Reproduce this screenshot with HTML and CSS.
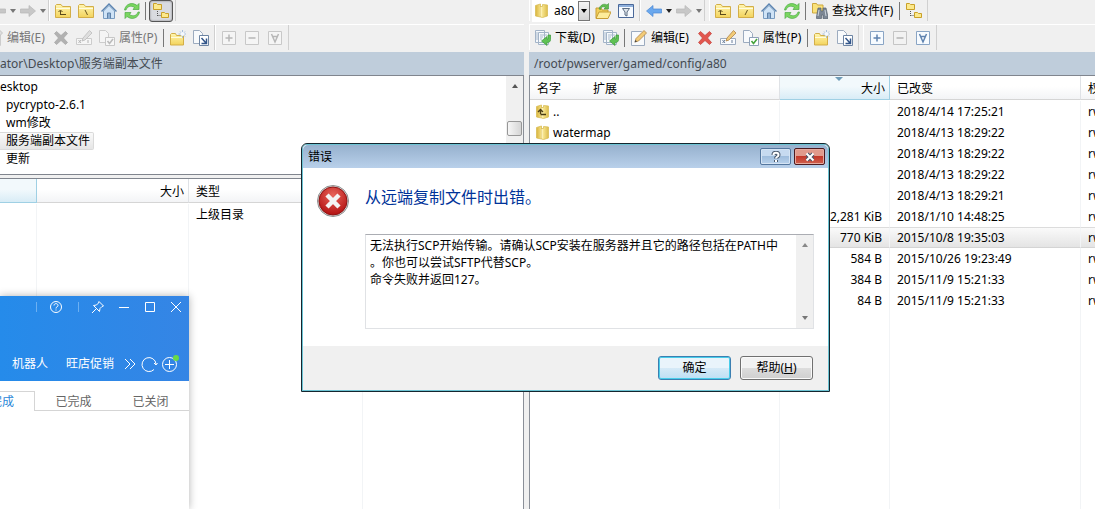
FILE: index.html
```html
<!DOCTYPE html>
<html lang="zh-CN">
<head>
  <meta charset="UTF-8">
  <title>a80 - WinSCP</title>
  <link rel="stylesheet" href="styles.css">
</head>
<body>
  <svg class="sprite" aria-hidden="true">
    <linearGradient id="gold" x1="0" y1="0" x2="0" y2="1"><stop offset="0" stop-color="#fff6b0"/><stop offset="1" stop-color="#f3d35c"/></linearGradient>
    <linearGradient id="goldDark" x1="0" y1="0" x2="1" y2="0"><stop offset="0" stop-color="#d9b43c"/><stop offset=".5" stop-color="#fbeb9a"/><stop offset="1" stop-color="#dcbc4a"/></linearGradient>
    <radialGradient id="red" cx=".5" cy=".3" r=".7"><stop offset="0" stop-color="#e8645a"/><stop offset="1" stop-color="#b31212"/></radialGradient>
    <symbol id="folder" viewBox="0 0 16 16">
      <path d="M.5 14.500V2.500l1-1h4.500l1.500 2h8v11z" fill="url(#gold)" stroke="#d3ae48"/>
      <path d="M1 5.500h14" stroke="#fffbe0"/>
    </symbol>
    <symbol id="folder-up" viewBox="0 0 16 16">
      <use href="#folder"/>
      <path d="M5.500 11.500V7.500M3.500 9l2-2 2 2M5 11.500h6" fill="none" stroke="#5b4a1c"/>
    </symbol>
    <symbol id="folder-root" viewBox="0 0 16 16">
      <use href="#folder"/><path d="M7 7l2.500 5" stroke="#6b571f"/>
    </symbol>
    <symbol id="folder-slash" viewBox="0 0 16 16">
      <use href="#folder"/><path d="M9.500 7L7 12" stroke="#6b571f"/>
    </symbol>
    <symbol id="home" viewBox="0 0 16 16">
      <path d="M2.500 8v7.500h11V8L8 2.500z" fill="#cfe3f6" stroke="#7a9cc0"/>
      <path d="M.5 8.500L8 1l7.500 7.500" fill="none" stroke="#5a83b0" stroke-width="1.300"/>
      <path d="M6.500 15.500V10h3v5.500" fill="#8fb0d2" stroke="#5f82aa"/>
    </symbol>
    <symbol id="refresh" viewBox="0 0 16 16">
      <path d="M2 7C3 3.500 7 2 10.500 4.500L9 6.500h6V.5l-2 2C8-1.500 1.500 1 .5 7zM14 9c-1 3.500-5 5-8.500 2.500L7 9.500H1v6l2-2c5 4 11.500 1.500 12.500-4.500z" fill="#7ad65f" stroke="#4dab47" stroke-width=".7"/>
    </symbol>
    <symbol id="tree" viewBox="0 0 16 16">
      <path d="M.5 6.500v-6h3l1 1h4v5zM8.500 14.500v-5h3l1 1h3v4z" fill="#fce98c" stroke="#c9a029"/>
      <path d="M4.500 8v5M4.500 12.500H8" stroke="#555" stroke-dasharray="1 1"/>
    </symbol>
    <symbol id="book" viewBox="0 0 16 16">
      <path d="M1.500 2.500l5-1.500v13l-5-1zM6.500 3.500h2v-2l5 .5v11l-5 1.500-2-.5z" fill="url(#goldDark)" stroke="#d8bd55" stroke-width=".8"/>
      <path d="M7 4v9.500" stroke="#fff6c8"/>
    </symbol>
    <symbol id="book-up" viewBox="0 0 16 16">
      <use href="#book"/><path d="M5.500 10V6M3 8l2.500-2.500L8 8M5.500 10.500H11" fill="none" stroke="#4a3c13" stroke-width="1.300"/>
    </symbol>
    <symbol id="open" viewBox="0 0 16 16">
      <path d="M1 15V5h5l1 2h6v8z" fill="#f2cf5a" stroke="#c79d35"/>
      <path d="M1 15.500L4 9h12l-3 6.500z" fill="#fdec9a" stroke="#c79d35"/>
      <path d="M4 6C5 2 9 0 12 2l1.500-1.500V6H9l1.500-1.500C8 3 6 4 5.500 6.500z" fill="#63bd50" stroke="#3f9338" stroke-width=".6"/>
    </symbol>
    <symbol id="filter" viewBox="0 0 16 16">
      <path d="M.5 1.500h15v13H.5z" fill="#f6faff" stroke="#4a6899"/><path d="M1 3h14" stroke="#8fb0dc" stroke-width="2"/>
      <path d="M4.500 5.500h7L9 9v4l-2-1V9z" fill="#dfe5ec" stroke="#5b6c82"/>
    </symbol>
    <symbol id="arrow-left" viewBox="0 0 16 16"><path d="M.5 8L7 2.500V6h8.500v4H7v3.500z" fill="#6aa8ee" stroke="#4c88d2" stroke-width=".7"/></symbol>
    <symbol id="arrow-right" viewBox="0 0 16 16"><path d="M15.500 8L9 2.500V6H.5v4H9v3.500z" fill="#a0a0a0" stroke="#808080" stroke-width=".7"/></symbol>
    <symbol id="find" viewBox="0 0 16 16">
      <path d="M.5 10V.5h4l1 1.500H11v8z" fill="#fae27a" stroke="#cda83e"/>
      <path d="M6 5h3v3h2V5h3l2 9v1.500h-5V12H9.500v3.500h-5V14z" fill="#7c8794" stroke="#566170" stroke-width=".7"/>
      <path d="M6 13l1-6M13 7l1 6" stroke="#ccd5df"/>
    </symbol>
    <symbol id="download" viewBox="0 0 16 16">
      <path d="M.5.5h9v12h-9zM3.500 2.500h10v12h-10z" fill="#f6f9fc" stroke="#a3b4c8"/>
      <path d="M5 5h7M5 7h3M5 9h2M1 3h2M1 5h2M1 7h2M1 9h2" stroke="#a9bacd"/>
      <path d="M15.500 5v4.500c0 2-1 3-3.500 3V15.500L6.500 11 12 6.500V9h1V5z" fill="#5fc254" stroke="#3c9a3a" stroke-width=".7"/>
    </symbol>
    <symbol id="edit" viewBox="0 0 16 16">
      <path d="M.5 1.500h10l3 3v11H.5z" fill="#f8fafc" stroke="#9cabbf"/>
      <path d="M4 12l1-3.500L13 .5l2.500 2.500-8 8z" fill="#f2cb77" stroke="#b08448" stroke-width=".8"/><path d="M3.500 12.500l1-2.500 1.500 1.500z" fill="#444"/>
    </symbol>
    <symbol id="delete" viewBox="0 0 16 16"><path d="M1.500 3.500l2-2L8 5.500l4.500-4 2 2L10.500 8l4 4.500-2 2-4.500-4-4.500 4-2-2 4-4.500z" fill="#e2564e" stroke="#c43d36" stroke-width=".7"/></symbol>
    <symbol id="rename" viewBox="0 0 16 16">
      <path d="M.5 8.500h15v6H.5z" fill="#fafcff" stroke="#9cabbf"/><path d="M2.500 10l2.500 3M5 10l-2.500 3M12 10v3" stroke="#6c7f99"/>
      <path d="M6 11l1-3 6.500-7.500L16 3 9 10z" fill="#f2cb77" stroke="#b08448" stroke-width=".8"/>
    </symbol>
    <symbol id="props" viewBox="0 0 16 16">
      <path d="M.5.5h6l3 3v9h-9z" fill="#f8fafc" stroke="#9cabbf"/><path d="M6.500 7.500h9v8h-9z" fill="#fff" stroke="#8fa1b8"/>
      <path d="M8.500 11l2 2.500L14 9" fill="none" stroke="#45a33b" stroke-width="1.600"/>
    </symbol>
    <symbol id="new-folder" viewBox="0 0 16 16">
      <path d="M.5 15V4.500l1-1h4l1 2h7V15z" fill="url(#gold)" stroke="#d3ae48"/><path d="M1 7.500h12" stroke="#fffbe0"/>
      <path d="M12.500 0v8M8.500 4h8M10 1.500l5 5M15 1.500l-5 5" stroke="#93b2d8" stroke-width=".8"/><circle cx="12.500" cy="4" r="2" fill="#f5f9ff"/>
    </symbol>
    <symbol id="shortcut" viewBox="0 0 16 16">
      <path d="M.5.5h6l3 3v10h-9z" fill="#f8fafc" stroke="#9cabbf"/><path d="M6.500 5.500h9v10h-9z" fill="#fff" stroke="#6d84a3"/>
      <path d="M8.500 8l4.500 5M13.500 8.500v5h-5" fill="none" stroke="#33568a" stroke-width="1.500"/>
    </symbol>
    <symbol id="plus" viewBox="0 0 16 16"><path d="M1.500 1.500h13v13h-13z" fill="#f7fbff" stroke="#8aa5c5"/><path d="M4.500 8h7M8 4.500v7" stroke="#5f83b0" stroke-width="1.500"/></symbol>
    <symbol id="minus" viewBox="0 0 16 16"><path d="M1.500 1.500h13v13h-13z" fill="#f2f2f2" stroke="#c5c5c5"/><path d="M4.500 8h7" stroke="#b3b3b3" stroke-width="1.500"/></symbol>
    <symbol id="minus-dark" viewBox="0 0 16 16"><path d="M1.500 1.500h13v13h-13z" fill="#f7fbff" stroke="#8aa5c5"/><path d="M4.500 8h7" stroke="#5f83b0" stroke-width="1.500"/></symbol>
    <symbol id="invert" viewBox="0 0 16 16"><path d="M1.500 1.500h13v13h-13z" fill="#f7fbff" stroke="#8aa5c5"/><path d="M4.500 4l3.500 8 3.500-8M5.500 6.500h5" fill="none" stroke="#5f83b0" stroke-width="1.500"/></symbol>
  </svg>

  <main class="commander">
    <section class="pane pane-local">
      <div class="toolbar toolbar-nav">
        <div class="band band-cut">
          <button class="tool off" aria-label="后退"><svg><use href="#arrow-left"/></svg></button>
          <button class="caret off" aria-label="后退历史"></button>
          <button class="tool off" aria-label="前进"><svg><use href="#arrow-right"/></svg></button>
          <button class="caret off" aria-label="前进历史"></button>
        </div>
        <div class="band">
          <button class="tool" aria-label="上级目录"><svg><use href="#folder-up"/></svg></button>
          <button class="tool" aria-label="根目录"><svg><use href="#folder-root"/></svg></button>
          <button class="tool" aria-label="主目录"><svg><use href="#home"/></svg></button>
          <button class="tool" aria-label="刷新"><svg><use href="#refresh"/></svg></button>
          <span class="divider"></span>
          <button class="tool pressed" aria-label="目录树"><svg><use href="#tree"/></svg></button>
        </div>
      </div>
      <div class="toolbar">
        <div class="band band-cut">
          <button class="tool text off"><svg><use href="#edit"/></svg>编辑(E)</button>
          <button class="tool off" aria-label="删除"><svg><use href="#delete"/></svg></button>
          <button class="tool off" aria-label="重命名"><svg><use href="#rename"/></svg></button>
          <button class="tool text off"><svg><use href="#props"/></svg>属性(P)</button>
          <span class="divider"></span>
          <button class="tool" aria-label="新建目录"><svg><use href="#new-folder"/></svg></button>
          <button class="tool" aria-label="快捷方式"><svg><use href="#shortcut"/></svg></button>
        </div>
        <div class="band">
          <button class="tool off" aria-label="选择"><svg><use href="#plus"/></svg></button>
          <button class="tool off" aria-label="取消选择"><svg><use href="#minus-dark"/></svg></button>
          <button class="tool off" aria-label="反选"><svg><use href="#invert"/></svg></button>
        </div>
      </div>
      <div class="path path-cut">ator\Desktop\服务端副本文件</div>
      <div class="tree">
        <ul>
          <li class="parent">esktop</li>
          <li>pycrypto-2.6.1</li>
          <li>wm修改</li>
          <li><span class="current">服务端副本文件</span></li>
          <li>更新</li>
        </ul>
        <div class="tree-scroll"><i class="up"></i><i class="thumb"></i></div>
      </div>
      <div class="list">
        <table>
          <colgroup><col class="l-name"><col class="l-size"><col class="l-type"><col></colgroup>
          <thead><tr><th class="sorted"></th><th class="num">大小</th><th>类型</th><th></th></tr></thead>
          <tbody>
            <tr><td></td><td></td><td>上级目录</td><td></td></tr>
            <tr class="rest"><td></td><td></td><td></td><td></td></tr>
          </tbody>
        </table>
      </div>
    </section>

    <section class="pane pane-remote">
      <div class="toolbar toolbar-nav">
        <div class="band">
          <label class="combo">
            <svg><use href="#book"/></svg>
            <select aria-label="目录"><option>a80</option></select>
            <span class="combo-arrow"></span>
          </label>
          <button class="tool" aria-label="打开目录"><svg><use href="#open"/></svg></button>
          <button class="tool" aria-label="过滤"><svg><use href="#filter"/></svg></button>
        </div>
        <div class="band">
          <button class="tool" aria-label="后退"><svg><use href="#arrow-left"/></svg></button>
          <button class="caret" aria-label="后退历史"></button>
          <button class="tool off" aria-label="前进"><svg><use href="#arrow-right"/></svg></button>
          <button class="caret off" aria-label="前进历史"></button>
        </div>
        <div class="band band-apart">
          <button class="tool" aria-label="上级目录"><svg><use href="#folder-up"/></svg></button>
          <button class="tool" aria-label="根目录"><svg><use href="#folder-slash"/></svg></button>
          <button class="tool" aria-label="主目录"><svg><use href="#home"/></svg></button>
          <button class="tool" aria-label="刷新"><svg><use href="#refresh"/></svg></button>
          <span class="divider"></span>
          <button class="tool text"><svg><use href="#find"/></svg>查找文件(F)</button>
          <span class="divider"></span>
          <button class="tool" aria-label="目录树"><svg><use href="#tree"/></svg></button>
        </div>
      </div>
      <div class="toolbar">
        <div class="band">
          <button class="tool text"><svg><use href="#download"/></svg>下载(D)</button>
          <button class="tool" aria-label="后台下载"><svg><use href="#download"/></svg></button>
          <span class="divider"></span>
          <button class="tool text"><svg><use href="#edit"/></svg>编辑(E)</button>
          <button class="tool" aria-label="删除"><svg><use href="#delete"/></svg></button>
          <button class="tool" aria-label="重命名"><svg><use href="#rename"/></svg></button>
          <button class="tool text"><svg><use href="#props"/></svg>属性(P)</button>
          <span class="divider"></span>
          <button class="tool" aria-label="新建目录"><svg><use href="#new-folder"/></svg></button>
          <button class="tool" aria-label="快捷方式"><svg><use href="#shortcut"/></svg></button>
        </div>
        <div class="band band-apart">
          <button class="tool" aria-label="选择"><svg><use href="#plus"/></svg></button>
          <button class="tool" aria-label="取消选择"><svg><use href="#minus"/></svg></button>
          <button class="tool" aria-label="反选"><svg><use href="#invert"/></svg></button>
        </div>
      </div>
      <div class="path">/root/pwserver/gamed/config/a80</div>
      <div class="list">
        <table>
          <colgroup><col class="r-name"><col class="r-ext"><col class="r-size"><col class="r-date"><col></colgroup>
          <thead><tr><th class="plain">名字</th><th>扩展</th><th class="num sorted"><i class="sort-mark"></i>大小</th><th>已改变</th><th>权限</th></tr></thead>
          <tbody>
            <tr><td colspan="2" class="file"><svg><use href="#book-up"/></svg>..</td><td></td><td>2018/4/14 17:25:21</td><td>rwxr-xr-x</td></tr>
            <tr><td colspan="2" class="file"><svg><use href="#book"/></svg>watermap</td><td></td><td>2018/4/13 18:29:22</td><td>rwxr-xr-x</td></tr>
            <tr><td colspan="2"></td><td></td><td>2018/4/13 18:29:22</td><td>rwxr-xr-x</td></tr>
            <tr><td colspan="2"></td><td></td><td>2018/4/13 18:29:22</td><td>rwxr-xr-x</td></tr>
            <tr><td colspan="2"></td><td></td><td>2018/4/13 18:29:21</td><td>rwxr-xr-x</td></tr>
            <tr><td colspan="2"></td><td class="num">2,281 KiB</td><td>2018/1/10 14:48:25</td><td>rw-r--r--</td></tr>
            <tr class="selected"><td colspan="2"></td><td class="num">770 KiB</td><td>2015/10/8 19:35:03</td><td>rw-r--r--</td></tr>
            <tr><td colspan="2"></td><td class="num">584 B</td><td>2015/10/26 19:23:49</td><td>rw-r--r--</td></tr>
            <tr><td colspan="2"></td><td class="num">384 B</td><td>2015/11/9 15:21:33</td><td>rw-r--r--</td></tr>
            <tr><td colspan="2"></td><td class="num">84 B</td><td>2015/11/9 15:21:33</td><td>rw-r--r--</td></tr>
            <tr class="rest"><td colspan="2"></td><td></td><td></td><td></td></tr>
          </tbody>
        </table>
      </div>
    </section>
  </main>

  <aside class="chat">
    <header class="chat-head">
      <div class="chat-controls">
        <span class="bar"></span>
        <button aria-label="帮助"><svg viewBox="0 0 14 14"><circle cx="7" cy="7" r="5.500"/><path d="M5 5.500c0-2.500 4-2.500 4 0C9 7 7 6.500 7 8.500M7 9.500v1"/></svg></button>
        <span class="bar"></span>
        <button aria-label="置顶"><svg viewBox="0 0 14 14"><path d="M8 1.500l4.500 4.500-1.500.5-2 2-.5 3L2.500 5.500l3-.5 2-2zM5 9l-4 4"/></svg></button>
        <button aria-label="最小化"><svg viewBox="0 0 14 14"><path d="M2 7.500h10"/></svg></button>
        <button aria-label="最大化"><svg viewBox="0 0 14 14"><path d="M2.500 2.500h9v9h-9z"/></svg></button>
        <button aria-label="关闭"><svg viewBox="0 0 14 14"><path d="M2 2l10 10M12 2L2 12"/></svg></button>
      </div>
      <nav class="chat-nav">
        <a href="#">机器人</a>
        <a href="#">旺店促销</a>
        <button aria-label="更多"><svg viewBox="0 0 14 14"><path d="M2 2l5 5-5 5M7 2l5 5-5 5"/></svg></button>
        <button class="large" aria-label="刷新"><svg viewBox="0 0 18 18"><path d="M14 14.500A7 7 0 1 1 16 9M14 8l2 2 1.500-2"/></svg></button>
        <button class="large" aria-label="添加"><svg viewBox="0 0 18 18"><circle cx="8.500" cy="9.500" r="7"/><path d="M4 9.500h9M8.500 5v9"/><circle class="dot" cx="15" cy="3" r="3"/></svg></button>
      </nav>
    </header>
    <nav class="chat-tabs">
      <a href="#" class="active">未完成</a>
      <a href="#">已完成</a>
      <a href="#">已关闭</a>
    </nav>
  </aside>

  <div class="dialog" role="dialog" aria-labelledby="dialogTitle">
    <header class="dialog-title">
      <span id="dialogTitle">错误</span>
      <button class="win-btn" aria-label="帮助"><svg viewBox="0 0 14 12"><path class="edge" d="M4.500 4c0-3 5-3 5 0C9.500 6 7 5.500 7 7.500M7 9v2"/><path class="core" d="M4.500 4c0-3 5-3 5 0C9.500 6 7 5.500 7 7.500M7 9v2"/></svg></button>
      <button class="win-btn win-close" aria-label="关闭"><svg viewBox="0 0 14 12"><path class="edge" d="M4 3l6 6M10 3L4 9"/><path class="core" d="M3.500 2.500l7 7M10.500 2.500l-7 7"/></svg></button>
    </header>
    <div class="dialog-body">
      <svg class="error-icon" viewBox="0 0 32 32">
        <circle cx="16" cy="16" r="15.500" fill="#d9d9d9" stroke="#8f8f8f"/>
        <circle cx="16" cy="16" r="14" fill="url(#red)" stroke="#8e1414"/>
        <path d="M10 10l12 12M22 10L10 22" stroke="#f4f4f4" stroke-width="4.500"/>
      </svg>
      <div class="dialog-text">
        <h1>从远端复制文件时出错。</h1>
        <div class="message">
          <textarea aria-label="错误详情" readonly>无法执行SCP开始传输。请确认SCP安装在服务器并且它的路径包括在PATH中
。你也可以尝试SFTP代替SCP。
命令失败并返回127。</textarea>
          <div class="message-scroll"><i class="up"></i><i class="down"></i></div>
        </div>
      </div>
    </div>
    <footer class="dialog-foot">
      <button class="btn btn-default">确定</button>
      <button class="btn">帮助(<u>H</u>)</button>
    </footer>
  </div>
</body>
</html>
```
FILE: styles.css
```css
* { box-sizing: border-box; }
body {
  margin: 0;
  height: 100vh;
  overflow: hidden;
  position: relative;
  background: #f0f0f0;
  color: #000;
  font: 12px/18px "Noto Sans", "Noto Sans CJK SC", sans-serif;
}
button, select, textarea { font: inherit; color: inherit; margin: 0; padding: 0; border: 0; background: none; }
a { color: inherit; text-decoration: none; }
svg { width: 16px; height: 16px; flex: none; }
.sprite { position: absolute; width: 0; height: 0; }

/* two panels */
.commander { display: flex; height: 100%; gap: 5px; }
.pane { display: flex; flex-direction: column; min-width: 0; overflow: hidden; }
.pane-local { flex: 524 1 0; }
.pane-remote { flex: 566 1 0; }

/* toolbars */
.toolbar { display: flex; height: 28px; padding-bottom: 2px; border-top: 1px solid #fff; }
.toolbar-nav { height: 24px; padding-bottom: 3px; border-top: 0; }
.band { display: flex; align-items: center; gap: 1px; padding: 0 2px; border-right: 1px solid #d0d0d0; border-left: 1px solid #fff; }
.band-cut { margin-left: -16px; padding-left: 0; border-left: 0; }
.toolbar-nav .band-cut { margin-left: -13px; }
.band-apart { margin-left: 4px; }
.tool { display: flex; align-items: center; gap: 4px; height: 22px; padding: 0 3px; white-space: nowrap; }
.tool.text { padding-right: 4px; }
.off { color: #777; }
.off svg { filter: grayscale(1); opacity: .5; }
.pressed { border: 1px solid #555; border-radius: 3px; background: #d9dbe0; box-shadow: inset 0 0 2px #777; }
.divider { width: 1px; height: 18px; margin: 0 2px 0 1px; background: #777; }
.caret { width: 6px; border: solid transparent; border-width: 4px 3px 0; border-top-color: #222; }
.caret.off { border-top-color: #777; }
.combo { display: grid; grid-template-columns: 20px 24px 12px; align-items: center; background: #fff; height: 22px; padding-left: 2px; margin-right: 1px; }
.combo select { grid-row: 1; grid-column: 2 / 4; appearance: none; height: 22px; outline: 0; }
.combo-arrow { grid-row: 1; grid-column: 3; height: 20px; border: 1px solid #777; background: linear-gradient(#f4f4f4, #d5d5d5); pointer-events: none; display: grid; place-items: center; }
.combo-arrow::after { content: ""; border: 3px solid transparent; border-top: 4px solid #000; border-bottom: 0; }

.path { height: 24px; padding: 3px 5px; background: #bfcddb; border-bottom: 1px solid #80858e; color: #454b52; white-space: nowrap; }
.path-cut { padding-left: 0; }

/* local directory tree */
.tree { display: flex; height: 99px; background: #fff; border-right: 1px solid #8a8f98; border-bottom: 1px solid #80858e; margin-bottom: 3px; }
.tree ul { flex: 1; margin: 0; padding: 2px 0; list-style: none; }
.tree li { padding-left: 6px; }
.tree .parent { padding-left: 0; }
.current { display: inline-block; margin-left: -6px; padding: 0 3px 0 6px; line-height: 16px; border: 1px solid #dadada; border-left: 0; border-radius: 0 2px 2px 0; background: linear-gradient(#fafafa, #e5e5e5); }
.tree-scroll { width: 17px; background: #f0f0f0; display: flex; flex-direction: column; align-items: center; padding-top: 8px; }
.up, .down { border: 3px solid transparent; }
.up { border-top: 0; border-bottom: 4px solid #555; }
.down { border-bottom: 0; border-top: 4px solid #777; }
.thumb { width: 15px; height: 15px; margin-top: 33px; border: 1px solid #979797; border-radius: 2px; background: linear-gradient(90deg, #f6f6f6, #d5d5d5); }

/* file lists */
.list { flex: 1; min-height: 0; overflow: hidden; background: #fff; border-top: 1px solid #80858e; }
.pane-local .list { border-right: 1px solid #8a8f98; }
.pane-remote .list { border-top: 0; border-left: 1px solid #8a8f98; }
table { width: 100%; height: 100%; table-layout: fixed; border-collapse: separate; border-spacing: 0; }
th { height: 24px; padding: 2px 7px 0; text-align: left; font-weight: normal; background: linear-gradient(#fff 45%, #f3f4f6); border-right: 1px solid #dfe2e6; border-bottom: 1px solid #d5d5d5; white-space: nowrap; }
td { height: 21px; padding: 0 7px; border-right: 1px solid #f2f4f6; white-space: nowrap; }
th.plain { border-right: 0; }
th.sorted { position: relative; background: linear-gradient(#f2f9fc 45%, #d8ecf6); border-color: #9fd0e4; }
th.num { text-align: right; padding-right: 4px; }
td.num { text-align: right; }
th:last-child, td:last-child { border-right: 0; }
.sort-mark { position: absolute; top: 1px; left: 50%; border: 4px solid transparent; border-top-color: #6f9cb8; border-bottom: 0; }
.file svg { vertical-align: middle; margin-right: 2px; }
.pane-remote .file { padding-left: 5px; }
tbody::before { content: ""; display: table-row; height: 1px; }
.selected td { background: linear-gradient(#fafafa, #e4e4e4); border-top: 1px solid #dcdcdc; border-bottom: 1px solid #d4d4d4; }
.rest td { height: auto; }
.l-name { width: 37px; }
.l-size { width: 152px; }
.l-type { width: 174px; }
.r-name { width: 56px; }
.r-ext { width: 194px; }
.r-size { width: 110px; }
.r-date { width: 191px; }

/* chat window */
.chat { position: absolute; left: 0; bottom: 0; width: 189px; height: 213px; background: #fff; box-shadow: 0 0 8px rgba(0, 0, 0, .3); }
.chat-head { height: 85px; background: linear-gradient(90deg, #258bea, #3585e5); color: #fff; display: flex; flex-direction: column; justify-content: space-between; padding: 4px 6px 8px 0; }
.chat-head svg { width: 14px; height: 14px; display: block; fill: none; stroke: #fff; }
.chat-controls { display: flex; justify-content: flex-end; align-items: center; gap: 12px; }
.bar { width: 1px; height: 10px; margin-left: 3px; background: #6cb0f2; }
.chat-nav { display: flex; justify-content: flex-end; align-items: center; gap: 3px; padding-right: 4px; white-space: nowrap; }
.chat-nav a { margin-right: 15px; }
.chat-nav a + a { margin-right: 6px; }
.chat-head .large svg { width: 18px; height: 18px; }
.chat-head .dot { fill: #69db45; stroke: none; }
.chat-tabs { display: flex; height: 30px; padding-top: 10px; color: #666; border-bottom: 1px solid #d5d5d5; white-space: nowrap; }
.chat-tabs a { flex: 1; text-align: center; line-height: 22px; }
.chat-tabs .active { flex: 0 0 35px; display: flex; justify-content: flex-end; height: 20px; padding-right: 20px; line-height: 20px; overflow: hidden; color: #2b87d8; background: #fff; border-top: 1px solid #d5d5d5; border-right: 1px solid #d5d5d5; }

/* error dialog */
.dialog { position: absolute; left: 301px; top: 143px; width: 529px; background: #fff; border: 1px solid #14262f; border-radius: 6px 6px 0 0; box-shadow: inset 0 0 0 1px #6cc3d3; padding: 1px; }
.dialog-title { display: flex; align-items: center; gap: 3px; height: 23px; padding: 0 3px 0 5px; border-radius: 5px 5px 0 0; background: linear-gradient(#96b1ce, #b9d0ea); }
.dialog-title span { flex: 1; }
.win-btn { display: grid; place-items: center; width: 31px; height: 17px; border: 1px solid #54779f; border-radius: 2px; background: linear-gradient(#c6daf0 50%, #9fbddd 50%, #b9d2ec); box-shadow: inset 0 0 0 1px #d5e4f4; }
.win-close { border-color: #4d1a1f; background: linear-gradient(#e09a8c 50%, #c3392b 50%, #d0604e); box-shadow: inset 0 0 0 1px #e6aa9f; }
.win-btn svg { width: 14px; height: 12px; fill: none; }
.win-btn .edge { stroke: #49586c; stroke-width: 4; }
.win-btn .core { stroke: #fff; stroke-width: 2; }
.dialog-body { display: flex; gap: 16px; padding: 17px 14px; }
.error-icon { width: 32px; height: 32px; }
.dialog-text { flex: 1; }
h1 { margin: 0 0 25px; font-size: 16px; line-height: 24px; font-weight: normal; color: #003399; }
.message { display: flex; height: 95px; border: 1px solid #e0e2e5; border-top-color: #abadb3; }
.message textarea { flex: 1; resize: none; outline: 0; overflow: hidden; padding: 2px 4px; line-height: 17px; }
.message-scroll { width: 17px; background: #f0f0f0; display: flex; flex-direction: column; align-items: center; justify-content: space-between; padding: 8px 0; }
.message-scroll .up { border-bottom-color: #888; }
.dialog-foot { display: flex; justify-content: flex-end; gap: 9px; padding: 10px 15px; background: #f0f0f0; }
.btn { width: 73px; height: 24px; border: 1px solid #707070; border-radius: 3px; background: linear-gradient(#f2f2f2 50%, #dddddd 50%, #cfcfcf); box-shadow: inset 0 0 0 1px #fafafa; }
.btn-default { border-color: #3c7fb1; background: linear-gradient(#e9f4fb 50%, #d6eaf7 50%, #bddff4); box-shadow: inset 0 0 0 1px #48cdea; }
```
